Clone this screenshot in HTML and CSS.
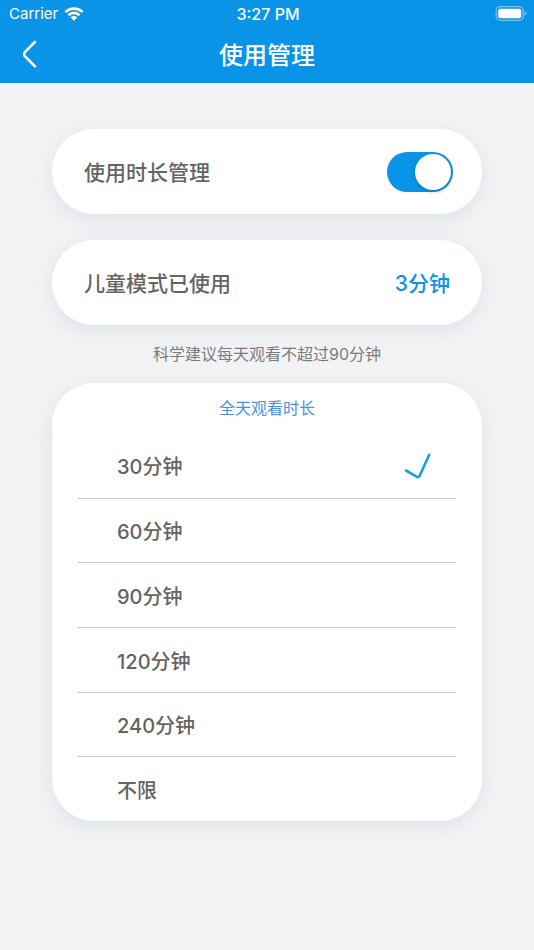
FILE: index.html
```html
<!DOCTYPE html>
<html lang="zh-CN">
<head>
<meta charset="utf-8">
<meta name="viewport" content="width=device-width, initial-scale=1">
<title>使用管理</title>
<link rel="stylesheet" href="styles.css">
</head>
<body>
<header class="top">
  <div class="status">
    <div class="carrier">
      <span>Carrier</span>
      <svg class="wifi" viewBox="0 0 20 15" aria-hidden="true">
        <path d="M0.4 5.2 A13.6 13.6 0 0 1 19.6 5.2 L17.7 7.1 A10.9 10.9 0 0 0 2.3 7.1 Z"/>
        <path d="M3.5 8.3 A9.2 9.2 0 0 1 16.5 8.3 L14.6 10.2 A6.5 6.5 0 0 0 5.4 10.2 Z"/>
        <path d="M6.6 11.4 A4.8 4.8 0 0 1 13.4 11.4 L10 14.8 Z"/>
      </svg>
    </div>
    <time>3:27 PM</time>
    <svg class="battery" viewBox="0 0 32 15" aria-hidden="true">
      <rect class="battery-shell" x="1.2" y="0.7" width="27" height="13.6" rx="4"/>
      <rect class="battery-fill" x="3.2" y="2.7" width="23" height="9.6" rx="2"/>
      <path class="battery-cap" d="M29.8 5.2 C32 6 32 9 29.8 9.8 Z"/>
    </svg>
  </div>
  <nav class="nav">
    <button class="back" type="button" aria-label="返回">
      <svg viewBox="0 0 14 28" aria-hidden="true"><path d="M12 2 L1.8 12.2 Q0.2 14.2 1.8 16.2 L12 26.4"/></svg>
    </button>
    <h1>使用管理</h1>
  </nav>
</header>
<main>
  <label class="card row">
    <span>使用时长管理</span>
    <input class="switch" type="checkbox" role="switch" checked>
  </label>
  <section class="card row">
    <span>儿童模式已使用</span>
    <strong class="used">3分钟</strong>
  </section>
  <p class="tip">科学建议每天观看不超过90分钟</p>
  <fieldset class="card limits">
    <legend>全天观看时长</legend>
    <div class="options">
      <label class="option"><span>30分钟</span><input type="radio" name="limit" checked><svg class="check" viewBox="0 0 28 28" aria-hidden="true"><path d="M2 18.5 L13 24.8 Q14.6 25.7 15.5 24 L25.2 2.8"/></svg></label>
      <label class="option"><span>60分钟</span><input type="radio" name="limit"><svg class="check" viewBox="0 0 28 28" aria-hidden="true"><path d="M2 18.5 L13 24.8 Q14.6 25.7 15.5 24 L25.2 2.8"/></svg></label>
      <label class="option"><span>90分钟</span><input type="radio" name="limit"><svg class="check" viewBox="0 0 28 28" aria-hidden="true"><path d="M2 18.5 L13 24.8 Q14.6 25.7 15.5 24 L25.2 2.8"/></svg></label>
      <label class="option"><span>120分钟</span><input type="radio" name="limit"><svg class="check" viewBox="0 0 28 28" aria-hidden="true"><path d="M2 18.5 L13 24.8 Q14.6 25.7 15.5 24 L25.2 2.8"/></svg></label>
      <label class="option"><span>240分钟</span><input type="radio" name="limit"><svg class="check" viewBox="0 0 28 28" aria-hidden="true"><path d="M2 18.5 L13 24.8 Q14.6 25.7 15.5 24 L25.2 2.8"/></svg></label>
      <label class="option"><span>不限</span><input type="radio" name="limit"><svg class="check" viewBox="0 0 28 28" aria-hidden="true"><path d="M2 18.5 L13 24.8 Q14.6 25.7 15.5 24 L25.2 2.8"/></svg></label>
    </div>
  </fieldset>
</main>
</body>
</html>
```
FILE: styles.css
```css
:root {
  --blue: #0a94e8;
  --text: #646464;
}

* {
  box-sizing: border-box;
}

body {
  margin: 0;
  min-height: 100vh;
  background: #f2f3f5;
  color: var(--text);
  font-family: Inter, "Noto Sans CJK SC", sans-serif;
  font-size: 21px;
  font-weight: 500;
}

.top {
  background: var(--blue);
  color: #fff;
}

.status {
  display: grid;
  grid-template-columns: 1fr auto 1fr;
  align-items: center;
  height: 27px;
  padding: 0 7px 0 9px;
  font-size: 16px;
}

.carrier {
  display: flex;
  align-items: center;
  gap: 6px;
  font-size: 15px;
  font-weight: 400;
}

.wifi {
  width: 20px;
  height: 15px;
  fill: #fff;
}

.battery {
  width: 32px;
  height: 15px;
  justify-self: end;
}

.battery-shell {
  fill: none;
  stroke: #fff;
  stroke-opacity: 0.45;
  stroke-width: 1.3;
}

.battery-fill {
  fill: #fff;
}

.battery-cap {
  fill: #fff;
  fill-opacity: 0.5;
}

.nav {
  display: grid;
  grid-template-columns: 44px 1fr 44px;
  align-items: center;
  height: 56px;
  padding: 0 8px 2px;
}

.back {
  display: grid;
  place-items: center;
  height: 44px;
  padding: 0;
  border: 0;
  background: none;
}

.back svg {
  width: 14px;
  height: 28px;
  fill: none;
  stroke: #fff;
  stroke-width: 2.6;
  stroke-linecap: round;
}

h1 {
  margin: 0;
  padding-bottom: 2px;
  font-size: 24px;
  font-weight: 500;
  text-align: center;
}

main {
  padding: 46px 52px;
}

.card {
  border-radius: 42px;
  background: #fff;
  box-shadow: 0 5px 22px rgba(70, 100, 130, 0.11);
}

.row {
  display: flex;
  align-items: center;
  justify-content: space-between;
  height: 85px;
  padding: 0 32px;
}

.row span,
.used {
  padding-bottom: 2px;
}

.row + .row {
  margin-top: 26px;
}

.switch {
  appearance: none;
  width: 66px;
  height: 40px;
  margin: 0 -3px 0 0;
  padding: 2px;
  border-radius: 20px;
  background: #ccc;
}

.switch::before {
  content: "";
  display: block;
  width: 36px;
  height: 36px;
  border-radius: 50%;
  background: #fff;
  box-shadow: 0 2px 5px rgba(0, 0, 0, 0.2);
}

.switch:checked {
  background: var(--blue);
}

.switch:checked::before {
  margin-left: auto;
}

.used {
  color: var(--blue);
  font-weight: 500;
}

.tip {
  margin: 0;
  color: #7b7b7b;
  font-size: 16px;
  font-weight: 400;
  line-height: 58px;
  text-align: center;
}

.limits {
  min-width: 0;
  margin: 0;
  padding: 0 26px;
  border: 0;
}

.limits legend {
  float: left;
  width: 100%;
  padding: 0;
  color: #4990e2;
  font-size: 16px;
  font-weight: 400;
  line-height: 50px;
  text-align: center;
}

.options {
  display: grid;
  grid-auto-rows: 1fr;
  clear: both;
  height: 388px;
  font-size: 20px;
}

.option {
  display: flex;
  align-items: center;
  justify-content: space-between;
  padding: 1px 24px 0 39px;
}

.option + .option {
  border-top: 1px solid #c8c8c8;
}

.option input {
  appearance: none;
  width: 0;
  height: 0;
  margin: 0 0 0 auto;
}

.check {
  width: 28px;
  height: 28px;
  fill: none;
  stroke: #1c9cec;
  stroke-width: 2.6;
  stroke-linecap: round;
  visibility: hidden;
}

input:checked + .check {
  visibility: visible;
}
```
